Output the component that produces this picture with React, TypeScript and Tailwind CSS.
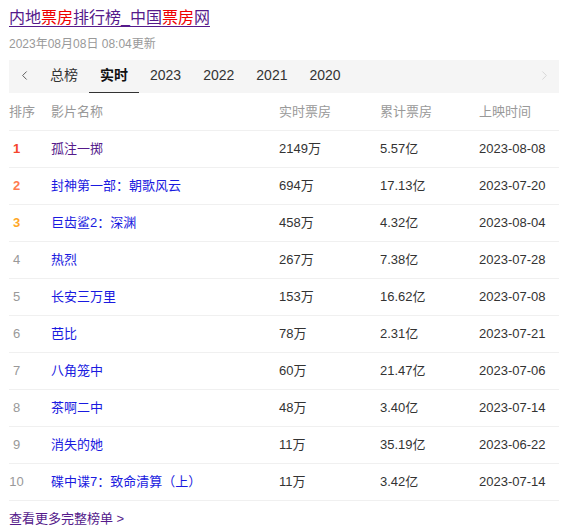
import { ChevronLeft, ChevronRight } from 'lucide-react';

type Movie = {
  rank: number;
  name: string;
  realtime: string;
  total: string;
  date: string;
  visited?: boolean;
};

const movies: Movie[] = [
  { rank: 1, name: '孤注一掷', realtime: '2149万', total: '5.57亿', date: '2023-08-08', visited: true },
  { rank: 2, name: '封神第一部：朝歌风云', realtime: '694万', total: '17.13亿', date: '2023-07-20' },
  { rank: 3, name: '巨齿鲨2：深渊', realtime: '458万', total: '4.32亿', date: '2023-08-04' },
  { rank: 4, name: '热烈', realtime: '267万', total: '7.38亿', date: '2023-07-28' },
  { rank: 5, name: '长安三万里', realtime: '153万', total: '16.62亿', date: '2023-07-08' },
  { rank: 6, name: '芭比', realtime: '78万', total: '2.31亿', date: '2023-07-21' },
  { rank: 7, name: '八角笼中', realtime: '60万', total: '21.47亿', date: '2023-07-06' },
  { rank: 8, name: '茶啊二中', realtime: '48万', total: '3.40亿', date: '2023-07-14' },
  { rank: 9, name: '消失的她', realtime: '11万', total: '35.19亿', date: '2023-06-22' },
  { rank: 10, name: '碟中谍7：致命清算（上）', realtime: '11万', total: '3.42亿', date: '2023-07-14' },
];

const tabs = ['总榜', '实时', '2023', '2022', '2021', '2020'];

// 前三名的排序颜色
const rankColor = (rank: number) => {
  if (rank === 1) return 'text-[#f5452c] font-bold';
  if (rank === 2) return 'text-[#ff7b4f] font-bold';
  if (rank === 3) return 'text-[#ffa726] font-bold';
  return 'text-[#999]';
};

export default function App() {
  return (
    <div className="min-h-screen bg-white px-[9px] font-['Liberation_Sans','Noto_Sans_CJK_SC',sans-serif]">
      {/* 标题 */}
      <div className="pt-[8px] text-[16px] leading-[20px]">
        <a href="#" className="text-[#551a8b] underline underline-offset-[3px]">
          内地<span className="text-[#e00]">票房</span>排行榜_中国<span className="text-[#e00]">票房</span>网
        </a>
      </div>
      <div className="mt-[7px] text-[12px] leading-[18px] text-[#999]">2023年08月08日 08:04更新</div>

      {/* 榜单 tabs */}
      <div className="mt-[7px] flex h-[33px] w-[550px] items-stretch bg-[#f5f5f5] text-[14px]">
        <div className="flex w-[30px] items-center justify-center pb-[2px] text-[#555]">
          <ChevronLeft size={15} strokeWidth={1.5} />
        </div>
        {tabs.map((t) => {
          const active = t === '实时';
          return (
            <div
              key={t}
              className={
                active
                  ? 'flex items-center border-b border-[#333] px-[11px] pb-[2px] font-bold text-[#111]'
                  : 'flex items-center px-[11px] pb-[3px] text-[#333]'
              }
            >
              {t}
            </div>
          );
        })}
        <div className="ml-auto flex w-[30px] items-center justify-center pb-[2px] text-[#ccc]">
          <ChevronRight size={15} strokeWidth={1.2} />
        </div>
      </div>

      {/* 表格 */}
      <div className="w-[550px] text-[13px]">
        <div className="flex h-[38px] items-center border-b border-[#f0f0f0] text-[#999]">
          <div className="w-[42px]">排序</div>
          <div className="w-[228px]">影片名称</div>
          <div className="w-[101px]">实时票房</div>
          <div className="w-[99px]">累计票房</div>
          <div className="flex-1">上映时间</div>
        </div>
        {movies.map((m) => (
          <div key={m.rank} className="flex h-[37px] items-center border-b border-[#f0f0f0] text-[#333]">
            <div className="w-[42px]">
              <span className={`inline-block w-[15px] text-center ${rankColor(m.rank)}`}>{m.rank}</span>
            </div>
            <div className="w-[228px]">
              <a href="#" className={m.visited ? 'text-[#551a8b]' : 'text-[#1a1ae0]'}>
                {m.name}
              </a>
            </div>
            <div className="w-[101px]">{m.realtime}</div>
            <div className="w-[99px]">{m.total}</div>
            <div className="flex-1">{m.date}</div>
          </div>
        ))}
      </div>

      <div className="mt-[8px] text-[13px] leading-[20px]">
        <a href="#" className="text-[#551a8b]">查看更多完整榜单 &gt;</a>
      </div>
    </div>
  );
}
